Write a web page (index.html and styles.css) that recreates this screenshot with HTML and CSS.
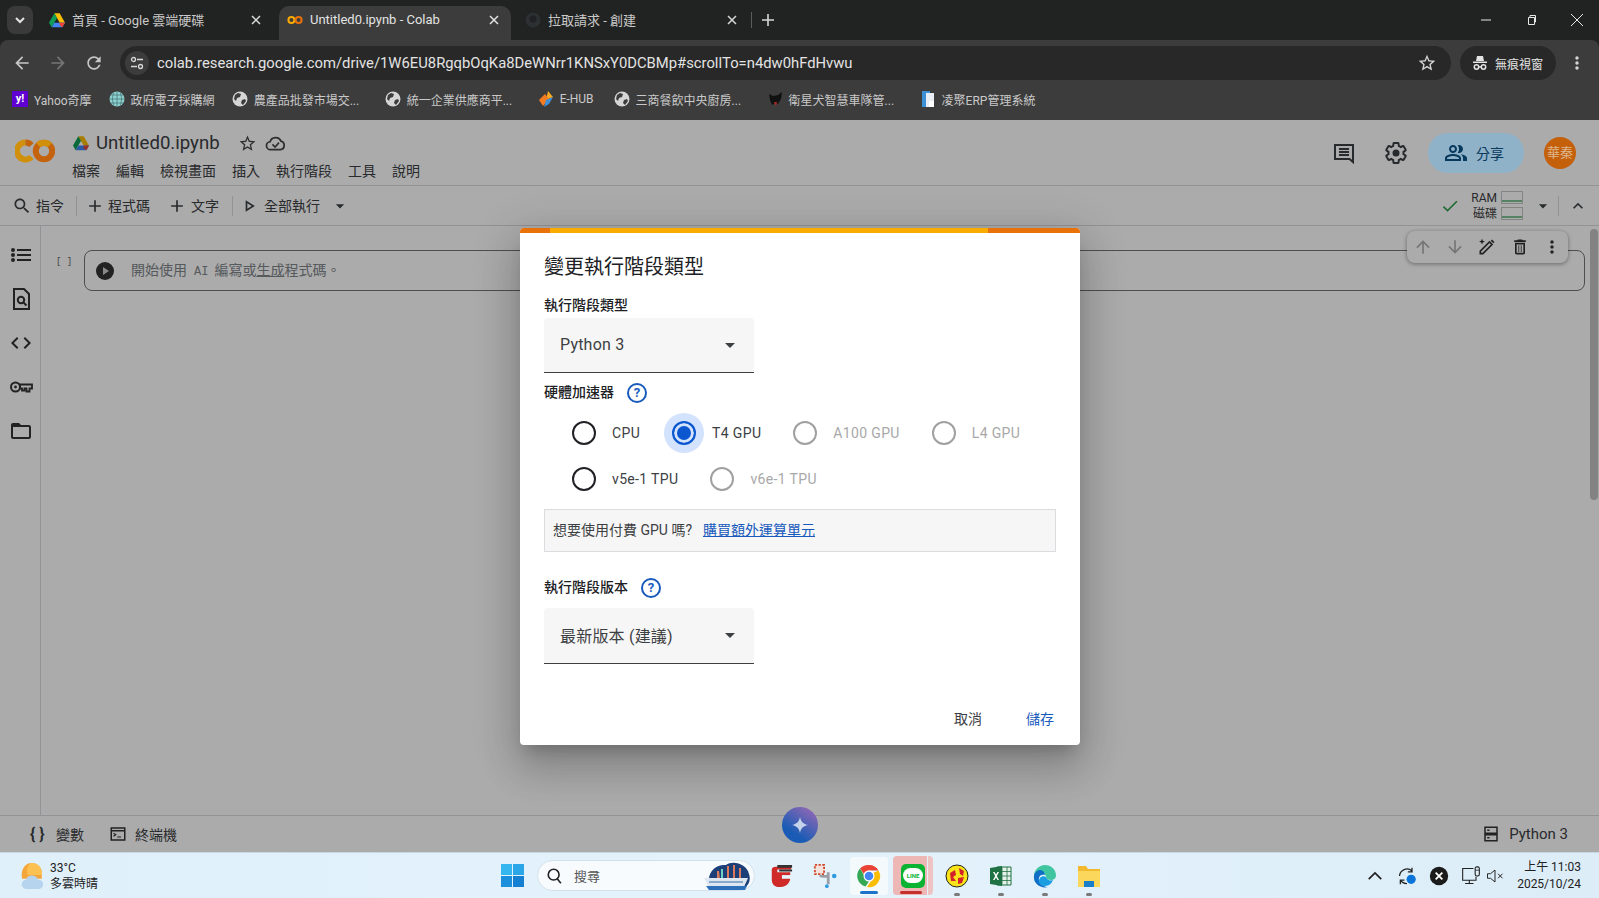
FILE: index.html
```html
<!DOCTYPE html>
<html lang="zh-Hant">

<head>
    <meta charset="utf-8">
    <title>Untitled0.ipynb - Colab</title>
    <link rel="stylesheet" href="styles.css">
</head>

<body>

    <!-- browser tabs -->
    <div class="tabstrip">
        <div class="tab-search"><svg class="ic16" viewBox="0 0 24 24"><path d="M6 9l6 6 6-6" fill="none" stroke="#e3e3e3" stroke-width="3"/></svg></div>
        <div class="tab">
            <svg class="ic16" viewBox="0 0 24 22"><path d="M8 1h8l8 14h-8z" fill="#fbbc04"/><path d="M8 1l4 7-8 14-4-7z" fill="#0f9d58"/><path d="M8 15h16l-4 7H4z" fill="#4285f4"/><path d="M16 15h8l-4 7-4-3z" fill="#ea4335"/></svg>
            <span class="tab-title">首頁 - Google 雲端硬碟</span>
            <svg class="tab-close" viewBox="0 0 12 12"><path d="M2 2l8 8M10 2l-8 8" stroke="#d8d8d8" stroke-width="1.500"/></svg>
        </div>
        <div class="tab tab-active">
            <svg class="ic16" viewBox="0 0 40 24"><circle cx="11" cy="12" r="7.500" fill="none" stroke="#f9ab00" stroke-width="5"/><circle cx="29" cy="12" r="7.500" fill="none" stroke="#e8710a" stroke-width="5"/></svg>
            <span class="tab-title">Untitled0.ipynb - Colab</span>
            <svg class="tab-close" viewBox="0 0 12 12"><path d="M2 2l8 8M10 2l-8 8" stroke="#e3e3e3" stroke-width="1.500"/></svg>
        </div>
        <div class="tab">
            <svg class="ic16" viewBox="0 0 16 16"><circle cx="8" cy="8" r="7.500" fill="#2c3033"/><circle cx="8" cy="7" r="3.500" fill="#202124"/></svg>
            <span class="tab-title">拉取請求 - 創建</span>
            <svg class="tab-close" viewBox="0 0 12 12"><path d="M2 2l8 8M10 2l-8 8" stroke="#d8d8d8" stroke-width="1.500"/></svg>
        </div>
        <div class="tab-sep"></div>
        <svg class="tab-new" viewBox="0 0 16 16"><path d="M8 2v12M2 8h12" stroke="#d6d6d6" stroke-width="1.600"/></svg>
        <div class="win-controls">
            <svg class="win-btn" viewBox="0 0 12 12"><path d="M1 6h10" stroke="#e8e8e8"/></svg>
            <svg class="win-btn" viewBox="0 0 12 12"><path d="M3.500 3.500h6v7h-6z M5 3.500V1.500h5.500v6.500H9.500" fill="none" stroke="#e8e8e8"/></svg>
            <svg class="win-btn win-close" viewBox="0 0 14 14"><path d="M1 1l12 12M13 1L1 13" stroke="#e8e8e8"/></svg>
        </div>
    </div>

    <!-- address bar -->
    <div class="toolbar">
        <svg class="nav-ic" viewBox="0 0 24 24"><path fill="#c7c7c7" d="M20 11H7.830l5.590-5.590L12 4l-8 8 8 8 1.410-1.410L7.830 13H20v-2z"/></svg>
        <svg class="nav-ic" viewBox="0 0 24 24"><path fill="#757575" d="M12 4l-1.410 1.410L16.170 11H4v2h12.170l-5.580 5.590L12 20l8-8z"/></svg>
        <svg class="nav-ic" viewBox="0 0 24 24"><path fill="#c7c7c7" d="M17.650 6.350C16.200 4.900 14.210 4 12 4c-4.420 0-7.990 3.580-7.990 8s3.570 8 7.990 8c3.730 0 6.840-2.550 7.730-6h-2.080c-.82 2.330-3.040 4-5.650 4-3.310 0-6-2.690-6-6s2.690-6 6-6c1.660 0 3.140.69 4.220 1.780L13 11h7V4l-2.350 2.350z"/></svg>
        <div class="omnibox">
            <div class="site-info"><svg class="ic16" viewBox="0 0 16 16"><g fill="none" stroke="#d8d8d8" stroke-width="1.300"><circle cx="4.500" cy="4.500" r="2"/><path d="M8 4.500h6M2 11.500h6"/><circle cx="11.500" cy="11.500" r="2"/></g></svg></div>
            <span class="url">colab.research.google.com/drive/1W6EU8RgqbOqKa8DeWNrr1KNSxY0DCBMp#scrollTo=n4dw0hFdHvwu</span>
            <svg class="omni-star" viewBox="0 0 24 24"><path fill="#d6d6d6" d="M22 9.240l-7.190-.62L12 2 9.190 8.630 2 9.240l5.460 4.730L5.820 21 12 17.270 18.180 21l-1.630-7.030L22 9.240zM12 15.400l-3.760 2.270 1-4.280-3.320-2.880 4.380-.38L12 6.100l1.710 4.040 4.380.38-3.320 2.880 1 4.280L12 15.400z"/></svg>
        </div>
        <div class="incognito">
            <svg class="ic16" viewBox="0 0 16 16"><path fill="#e3e3e3" d="M5 1h6l1 5H4zM1 6.500h14V8H1z"/><g fill="none" stroke="#e3e3e3" stroke-width="1.500"><circle cx="4.500" cy="12" r="2.200"/><circle cx="11.500" cy="12" r="2.200"/><path d="M6.700 12h2.600"/></g></svg>
            <span>無痕視窗</span>
        </div>
        <svg class="nav-ic nav-more" viewBox="0 0 24 24"><path fill="#d6d6d6" d="M12 8c1.100 0 2-.9 2-2s-.9-2-2-2-2 .9-2 2 .9 2 2 2zm0 2c-1.100 0-2 .9-2 2s.9 2 2 2 2-.9 2-2-.9-2-2-2zm0 6c-1.100 0-2 .9-2 2s.9 2 2 2 2-.9 2-2-.9-2-2-2z"/></svg>
    </div>

    <!-- bookmarks -->
    <div class="bookmarks">
        <div class="bm"><span class="bm-yahoo">y!</span><span>Yahoo奇摩</span></div>
        <div class="bm"><svg class="ic16" viewBox="0 0 16 16"><circle cx="8" cy="8" r="7.500" fill="#8fd3cf"/><path d="M.5 8h15M8 .5v15M2 4h12M2 12h12M5 1.500c-2 4-2 9 0 13M11 1.500c2 4 2 9 0 13" stroke="#3f6d70" stroke-width=".7" fill="none"/></svg><span>政府電子採購網</span></div>
        <div class="bm bm-cut"><svg class="ic16"><use href="#globe"/></svg><span>農產品批發市場交...</span></div>
        <div class="bm bm-cut"><svg class="ic16"><use href="#globe"/></svg><span>統一企業供應商平...</span></div>
        <div class="bm bm-ehub"><svg class="ic16" viewBox="0 0 16 16"><path d="M10 0l5 6-7 3z" fill="#f7a823"/><path d="M1 9l6-6 4 5-6 7z" fill="#f47b20"/><path d="M8 9l7-3-4 7-5 3z" fill="#3f8fd8"/></svg><span>E-HUB</span></div>
        <div class="bm bm-cut"><svg class="ic16"><use href="#globe"/></svg><span>三商餐飲中央廚房...</span></div>
        <div class="bm bm-cut"><svg class="ic16" viewBox="0 0 16 16"><path d="M2 3l4 2 5-1 4-3-1 7-3 5-3-1-3 2-2-5z" fill="#111"/><path d="M7 11l2 4 1-4z" fill="#b3261e"/></svg><span>衛星犬智慧車隊管...</span></div>
        <div class="bm"><svg class="ic16" viewBox="0 0 16 16"><path d="M2 0h8v16H2z" fill="#3d8fd6"/><path d="M6 2h8v14H6z" fill="#e8eef3"/><path d="M9 10h5v6H9z" fill="#fff"/></svg><span>凌聚ERP管理系統</span></div>
    </div>

    <svg class="defs">
        <symbol id="globe" viewBox="0 0 16 16">
            <circle cx="8" cy="8" r="7.500" fill="#d5d5d5"/>
            <path d="M3 4l3-2 3 1-1 3-3 1-1 3-2-2zM10 9l3-1 1 2-3 4-2-2z" fill="#3c3c3c"/>
        </symbol>
    </svg>

    <!-- colab page -->
    <div class="app">
        <header class="app-header">
            <svg class="co-logo" viewBox="0 0 40 24"><path d="M10.500 3.500a8.500 8.500 0 1 0 6 14.500" fill="none" stroke="#d0900c" stroke-width="6"/><path d="M10.500 3.500a8.500 8.500 0 0 1 6 2.500" fill="none" stroke="#c4620e" stroke-width="6"/><circle cx="29" cy="12" r="8.200" fill="none" stroke="#c4620e" stroke-width="6"/><path d="M23.200 6.200a8.200 8.200 0 0 1 11.600 0" fill="none" stroke="#d0900c" stroke-width="6"/></svg>
            <div class="doc-info">
                <div class="doc-title">
                    <svg class="drive-ic" viewBox="0 0 24 22"><path d="M8 0h8l8 14h-8z" fill="#fbbc04"/><path d="M8 0l4 7-8 14-4-7z" fill="#0f9d58"/><path d="M8 14h16l-4 7H4z" fill="#4285f4"/><path d="M16 14h8l-4 7-4-3z" fill="#ea4335"/></svg>
                    <span class="doc-name">Untitled0.ipynb</span>
                    <svg class="doc-star" viewBox="0 0 24 24"><path fill="#444" d="M22 9.240l-7.190-.62L12 2 9.190 8.630 2 9.240l5.460 4.730L5.820 21 12 17.270 18.180 21l-1.630-7.030L22 9.240zM12 15.400l-3.760 2.270 1-4.280-3.320-2.880 4.380-.38L12 6.100l1.710 4.040 4.380.38-3.320 2.880 1 4.280L12 15.400z"/></svg>
                    <svg class="doc-cloud" viewBox="0 0 24 24"><path d="M6.500 19a4.500 4.500 0 0 1-.6-9A6.500 6.500 0 0 1 18.200 9.200 5 5 0 0 1 17.500 19z" fill="none" stroke="#444" stroke-width="2"/><path d="M8.500 13l3 3 4.500-5" fill="none" stroke="#444" stroke-width="1.800"/></svg>
                </div>
                <nav class="menu">
                    <span>檔案</span><span>編輯</span><span>檢視畫面</span><span>插入</span><span>執行階段</span><span>工具</span><span>說明</span>
                </nav>
            </div>
            <div class="header-right">
                <svg class="hd-ic" viewBox="0 0 24 24"><path d="M3 4h18v17l-3.500-3H3z M7 8h10M7 11h10M7 14h10" fill="none" stroke="#3c4043" stroke-width="2"/></svg>
                <svg class="hd-ic" viewBox="0 0 24 24"><path fill="none" stroke="#3c4043" stroke-width="2" d="M19.430 12.980c.04-.32.07-.64.07-.98s-.03-.66-.07-.98l2.110-1.650c.19-.15.24-.42.12-.64l-2-3.460c-.12-.22-.39-.3-.61-.22l-2.490 1c-.52-.4-1.080-.73-1.690-.98l-.38-2.650C14.460 2.180 14.250 2 14 2h-4c-.25 0-.46.18-.49.42l-.38 2.650c-.61.25-1.170.59-1.690.98l-2.490-1c-.23-.09-.49 0-.61.22l-2 3.460c-.13.22-.07.49.12.64l2.110 1.650c-.04.32-.07.65-.07.98s.03.66.07.98l-2.110 1.650c-.19.15-.24.42-.12.64l2 3.460c.12.22.39.3.61.22l2.490-1c.52.4 1.080.73 1.690.98l.38 2.650c.03.24.24.42.49.42h4c.25 0 .46-.18.49-.42l.38-2.650c.61-.25 1.170-.59 1.690-.98l2.490 1c.23.09.49 0 .61-.22l2-3.460c.12-.22.07-.49-.12-.64l-2.110-1.650z"/><circle cx="12" cy="12" r="3.500" fill="#3c4043"/></svg>
                <div class="share">
                    <svg class="share-ic" viewBox="0 0 24 24"><path fill="#06395c" d="M16.670 13.130C18.040 14.060 19 15.320 19 17v3h4v-3c0-2.180-3.570-3.470-6.330-3.870zM15 12c2.210 0 4-1.790 4-4s-1.790-4-4-4c-.47 0-.91.1-1.330.24C14.500 5.270 15 6.580 15 8s-.5 2.730-1.330 3.760c.42.14.86.24 1.330.24zM9 12c2.210 0 4-1.790 4-4s-1.790-4-4-4-4 1.790-4 4 1.790 4 4 4zm0-6c1.100 0 2 .9 2 2s-.9 2-2 2-2-.9-2-2 .9-2 2-2zM9 13c-2.670 0-8 1.340-8 4v3h16v-3c0-2.660-5.330-4-8-4zm6 5H3v-.99C3.200 16.290 6.300 15 9 15s5.800 1.290 6 2v1z"/></svg>
                    <span>分享</span>
                </div>
                <div class="avatar">華秦</div>
            </div>
        </header>

        <div class="cmd-bar">
            <div class="cmd cmd-search"><svg class="cmd-ic" viewBox="0 0 24 24"><path d="M15.500 14h-.79l-.28-.27C15.410 12.590 16 11.110 16 9.500 16 5.910 13.090 3 9.500 3S3 5.910 3 9.500 5.910 16 9.500 16c1.610 0 3.090-.59 4.230-1.570l.27.28v.79l5 4.990L20.490 19l-4.990-5zm-6 0C7.010 14 5 11.990 5 9.500S7.010 5 9.500 5 14 7.010 14 9.500 11.990 14 9.500 14z"/></svg><span>指令</span></div>
            <div class="cmd-sep"></div>
            <div class="cmd cmd-code"><svg class="cmd-ic" viewBox="0 0 24 24"><path d="M19 13h-6v6h-2v-6H5v-2h6V5h2v6h6v2z"/></svg><span>程式碼</span></div>
            <div class="cmd cmd-text"><svg class="cmd-ic" viewBox="0 0 24 24"><path d="M19 13h-6v6h-2v-6H5v-2h6V5h2v6h6v2z"/></svg><span>文字</span></div>
            <div class="cmd-sep cmd-sep-run"></div>
            <div class="cmd cmd-run"><svg class="cmd-ic" viewBox="0 0 24 24"><path d="M10 8.640L15.270 12 10 15.360V8.640M8 5v14l11-7L8 5z"/></svg><span>全部執行</span></div>
            <svg class="cmd-caret" viewBox="0 0 24 24"><path d="M7 10l5 5 5-5z"/></svg>

            <div class="res">
                <svg class="res-check" viewBox="0 0 24 24"><path fill="#2f9e4f" d="M9 16.170L4.830 12l-1.420 1.410L9 19 21 7l-1.410-1.410z"/></svg>
                <div class="res-labels"><span>RAM</span><span>磁碟</span></div>
                <div class="res-bars"><div class="res-bar"></div><div class="res-bar"></div></div>
                <svg class="cmd-caret res-caret" viewBox="0 0 24 24"><path d="M7 10l5 5 5-5z"/></svg>
                <div class="cmd-sep res-sep"></div>
                <svg class="res-up" viewBox="0 0 24 24"><path d="M12 8l-6 6 1.410 1.410L12 10.830l4.590 4.580L18 14z"/></svg>
            </div>
        </div>

        <div class="main">
            <aside class="sidebar">
                <svg class="side-ic" viewBox="0 0 24 24"><path d="M8 6h14v2H8zM8 11h14v2H8zM8 16h14v2H8z"/><circle cx="4" cy="7" r="2"/><circle cx="4" cy="12" r="2"/><circle cx="4" cy="17" r="2"/></svg>
                <svg class="side-ic" viewBox="0 0 24 24"><path d="M5 2h10l5 5v15H5z" fill="none" stroke="#333" stroke-width="2"/><circle cx="12" cy="13" r="3.200" fill="none" stroke="#333" stroke-width="2"/><path d="M14.500 15.500l3 3" stroke="#333" stroke-width="2"/></svg>
                <svg class="side-ic" viewBox="0 0 24 24"><path d="M9.400 16.600L4.800 12l4.600-4.600L8 6l-6 6 6 6 1.400-1.400zm5.200 0l4.600-4.600-4.600-4.600L16 6l6 6-6 6-1.400-1.400z"/></svg>
                <svg class="side-ic" viewBox="0 0 24 24"><circle cx="6.500" cy="12" r="4.500" fill="none" stroke="#333" stroke-width="2"/><circle cx="6.500" cy="12" r="1.400"/><path d="M11 9.500h12v4h-2.500v3h-3v-3h-2v2h-2.500v-2H11z" fill="none" stroke="#333" stroke-width="1.800"/></svg>
                <svg class="side-ic" viewBox="0 0 24 24"><path d="M20 6h-8l-2-2H4c-1.100 0-1.990.9-1.990 2L2 18c0 1.100.9 2 2 2h16c1.100 0 2-.9 2-2V8c0-1.100-.9-2-2-2zm0 12H4V8h16v10z"/></svg>
            </aside>
            <div class="notebook">
                <div class="cell-count">[ ]</div>
                <div class="cell">
                    <svg class="cell-run" viewBox="0 0 18 18"><circle cx="9" cy="9" r="9" fill="#333"/><path d="M7 5l6 4-6 4z" fill="#ccc"/></svg>
                    <span class="cell-hint">開始使用<span class="cell-ai">AI</span>編寫或<u>生成</u>程式碼<span class="cell-stop">。</span></span>
                </div>
            </div>
        </div>

        <footer class="status-bar">
            <span class="status-braces">{ }</span><span class="status-txt">變數</span>
            <svg class="status-ic" viewBox="0 0 24 24"><path d="M3 4h18v16H3z M3 7.500h18" fill="none" stroke="#333" stroke-width="2"/><path d="M6 11l3 2-3 2M11 16h5" fill="none" stroke="#333" stroke-width="1.500"/></svg><span class="status-txt">終端機</span>
            <div class="status-right">
                <svg class="status-ic" viewBox="0 0 24 24"><path d="M4 3h16v8H4zM4 13h16v8H4z" fill="none" stroke="#333" stroke-width="2"/><path d="M7 6h3v2H7zM7 16h3v2H7z" fill="#333"/></svg>
                <span class="status-txt status-kernel">Python 3</span>
            </div>
        </footer>

        <!-- floating cell tools, under the scrim -->
        <div class="cell-tools">
            <svg class="tool-ic" viewBox="0 0 24 24"><path fill="#b0b0b0" d="M4 12l1.410 1.410L11 7.830V20h2V7.830l5.580 5.590L20 12l-8-8-8 8z"/></svg>
            <svg class="tool-ic" viewBox="0 0 24 24"><path fill="#b0b0b0" d="M20 12l-1.410-1.410L13 16.170V4h-2v12.170l-5.580-5.590L4 12l8 8 8-8z"/></svg>
            <svg class="tool-ic" viewBox="0 0 24 24"><path d="M7 20H4v-3L15 6l3 3z" fill="none" stroke="#333" stroke-width="2"/><path d="M16.500 4.500l1.500-1.500 3 3-1.500 1.500z" fill="#333"/><path d="M6 2l1 2.500L9.500 5.500 7 6.500 6 9 5 6.500 2.500 5.500 5 4.500z" fill="#333"/></svg>
            <svg class="tool-ic" viewBox="0 0 24 24"><path fill="#333" d="M6 19c0 1.100.9 2 2 2h8c1.100 0 2-.9 2-2V7H6v12zM8 9h8v10H8V9zm7.500-5l-1-1h-5l-1 1H5v2h14V4z"/><path d="M10.500 10v8M13.500 10v8" stroke="#333"/></svg>
            <svg class="tool-ic" viewBox="0 0 24 24"><path fill="#333" d="M12 8c1.100 0 2-.9 2-2s-.9-2-2-2-2 .9-2 2 .9 2 2 2zm0 2c-1.100 0-2 .9-2 2s.9 2 2 2 2-.9 2-2-.9-2-2-2zm0 6c-1.100 0-2 .9-2 2s.9 2 2 2 2-.9 2-2-.9-2-2-2z"/></svg>
        </div>
        <div class="page-scroll"></div>

        <div class="scrim"></div>

        <div class="gemini"><svg class="gemini-star" viewBox="0 0 24 24"><path d="M12 1c1 6.500 4.500 10 11 11-6.500 1-10 4.500-11 11-1-6.500-4.500-10-11-11 6.500-1 10-4.500 11-11z" fill="#c5d3ea"/></svg></div>

        <!-- runtime dialog -->
        <div class="dialog">
            <div class="dialog-strip"><i class="strip-o"></i><i class="strip-y"></i><i class="strip-e"></i></div>
            <div class="dialog-body">
                <h2 class="dialog-title">變更執行階段類型</h2>

                <div class="field-label label-type">執行階段類型</div>
                <div class="select select-type"><span class="select-value">Python 3</span><svg class="select-caret" viewBox="0 0 10 5"><path d="M0 0l5 5 5-5z"/></svg></div>

                <div class="field-label label-hw">硬體加速器<span class="help help-hw">?</span></div>
                <div class="radio-row radio-row-first">
                    <div class="radio-opt"><span class="radio"></span><span>CPU</span></div>
                    <div class="radio-opt on"><span class="radio"></span><span>T4 GPU</span></div>
                    <div class="radio-opt off"><span class="radio"></span><span>A100 GPU</span></div>
                    <div class="radio-opt off"><span class="radio"></span><span>L4 GPU</span></div>
                </div>
                <div class="radio-row">
                    <div class="radio-opt"><span class="radio"></span><span>v5e-1 TPU</span></div>
                    <div class="radio-opt off"><span class="radio"></span><span>v6e-1 TPU</span></div>
                </div>

                <div class="info-box"><span class="info-txt">想要使用付費 GPU 嗎?</span><a class="info-link">購買額外運算單元</a></div>

                <div class="field-label label-ver">執行階段版本<span class="help help-ver">?</span></div>
                <div class="select select-ver"><span class="select-value">最新版本 (建議)</span><svg class="select-caret" viewBox="0 0 10 5"><path d="M0 0l5 5 5-5z"/></svg></div>

                <div class="dialog-actions">
                    <span class="btn-cancel">取消</span>
                    <span class="btn-save">儲存</span>
                </div>
            </div>
        </div>
    </div>

    <!-- windows taskbar -->
    <div class="taskbar">
        <div class="weather">
            <svg class="weather-ic" viewBox="0 0 24 30"><path d="M12 1a11 11 0 0 1 11 13v4H2C0 10 4 1 12 1z" fill="#f5a63a"/><path d="M12 1a11 11 0 0 1 11 13H8C6 8 8 3 12 1z" fill="#fbc252"/><path d="M7 29a5 5 0 0 1-1-10 7 7 0 0 1 13 0 5 5 0 0 1 1 10z" fill="#b6d4ee"/></svg>
            <div class="weather-txt"><span>33°C</span><span>多雲時晴</span></div>
        </div>
        <svg class="win-logo" viewBox="0 0 23 23"><path d="M0 0h11v11H0z" fill="#35b6ee"/><path d="M12 0h11v11H12z" fill="#2aa5e8"/><path d="M0 12h11v11H0z" fill="#1c8fdc"/><path d="M12 12h11v11H12z" fill="#1580d2"/></svg>
        <div class="search-pill">
            <svg class="pill-ic" viewBox="0 0 20 20"><circle cx="8.500" cy="8.500" r="6" fill="none" stroke="#222" stroke-width="1.800"/><path d="M12.500 13l4 5" stroke="#222" stroke-width="1.800"/></svg>
            <span class="pill-txt">搜尋</span>
            <svg class="pill-art" viewBox="0 0 48 30"><path d="M6 20C5 10 14 3 23 4 30-1 44 3 46 13c2 6 0 11-5 14H10z" fill="#1d3f78"/><path d="M14 10l2 0 1 8h-3zM24 5h2v13h-2zM30 4h2v14h-2zM36 7h2v11h-2z" fill="#d9795c"/><path d="M18 8h2v10h-2z" fill="#6fd0c8"/><path d="M1 17h44l-4 9H6z" fill="#dce7f2"/><path d="M6 20h34v2H6z" fill="#8aa8c8"/><path d="M3 25h41l-2 4H6z" fill="#2d6fb8"/></svg>
        </div>
        <div class="apps">
            <div class="app-ic"><svg viewBox="0 0 26 26"><path d="M3 6c0-2 2-3 4-3h17v3H9v3h14v6c0 6-5 10-10 10H9c-4-1-6-4-6-8z" fill="#cf2a27"/><path d="M9 1h16v3H9zM11 6h14v2H11z" fill="#333"/><path d="M14 12h10v4H14z" fill="#e9f3fa"/></svg></div>
            <div class="app-ic"><svg viewBox="0 0 26 26"><path d="M2 1h10v10H2z" fill="#f6e2dc"/><path d="M2 1h10v10H2z" fill="none" stroke="#cf4b2e" stroke-width="2" stroke-dasharray="2.500 1.500"/><path d="M7 12h10v3h-6l-4-1zM15 9h3v13h-3z" fill="#9a9fa6"/><circle cx="23" cy="13" r="2.500" fill="#2f9be0"/><circle cx="15" cy="24" r="2" fill="#2f9be0"/></svg></div>
            <div class="app-ic app-chrome">
                <svg viewBox="0 0 24 24"><path d="M12 1a11 11 0 0 1 9.500 5.500H12a5.500 5.500 0 0 0-5.200 3.600L3 4.500A11 11 0 0 1 12 1z" fill="#ea4335"/><path d="M3 4.500l5 8.500a5 5 0 0 0 4 4.500L8.500 22.500A11 11 0 0 1 3 4.500z" fill="#34a853"/><path d="M21.500 6.500A11 11 0 0 1 10 23l4-6a5.500 5.500 0 0 0 2-8z" fill="#fbbc04"/><circle cx="12" cy="12" r="5.500" fill="#fff"/><circle cx="12" cy="12" r="4.300" fill="#4285f4"/></svg>
                <i class="app-bar"></i>
            </div>
            <div class="app-ic app-line">
                <div class="line-tile"><span class="line-bubble">LINE</span></div>
                <i class="app-bar"></i>
            </div>
            <div class="app-ic app-open"><svg viewBox="0 0 24 24"><circle cx="12" cy="12" r="11" fill="#f9e419" stroke="#222" stroke-width="1"/><path d="M5 9l5-3 1 5-3 2 3 4-5 0zM14 4l5 3-1 5-3-2zM13 14l6-1-2 6-4 1z" fill="#d3222a"/></svg><i class="app-dot"></i></div>
            <div class="app-ic app-open"><svg viewBox="0 0 24 24"><path d="M8 3h14v18H8z" fill="#e6f1ea" stroke="#1f7244"/><path d="M13 3v18M18 3v18M8 7.500h14M8 12h14M8 16.500h14" stroke="#1f7244" stroke-width=".8"/><path d="M1 4l12-2v20L1 20z" fill="#1f7244"/><path d="M4 8l1.500 0 1.500 2.500L8.500 8H10l-2.200 4L10 16H8.500L7 13.500 5.500 16H4l2.200-4z" fill="#fff"/></svg><i class="app-dot"></i></div>
            <div class="app-ic app-open"><svg viewBox="0 0 24 24"><path d="M12 1c6 0 11 4.500 11 10.500 0 3-2.500 4.500-5 4.500-3 0-5-1.500-5-3.500 0-2-3-4-6-2C9 6 4 8 1 12 1 6 6 1 12 1z" fill="#3fc6a0"/><path d="M1 12c.5-4 4-6.500 6.500-6 3 .5 4.500 3 4 5-4-1-6.500 2-5.500 6 1 3.500 5 6 9 6C8 25 0 20 1 12z" fill="#0f6fc6"/><path d="M13 13c1 3 4 4 7 3-1 3-4 6-8 6-3 0-6-2-6-5 0-3 3-6 7-4z" fill="#1b9de2"/></svg><i class="app-dot"></i></div>
            <div class="app-ic app-open"><svg viewBox="0 0 24 24"><path d="M1 2h8l2 3h12v18H1z" fill="#f2b82e"/><path d="M1 7h22v16H1z" fill="#fbd75b"/><path d="M7 17h10v6H7z" fill="#1a7fc9"/></svg><i class="app-dot"></i></div>
        </div>
        <div class="tray">
            <svg class="tray-ic" viewBox="0 0 16 16"><path d="M3 10.500l5-5 5 5" fill="none" stroke="#222" stroke-width="1.400"/></svg>
            <svg class="tray-ic" viewBox="0 0 24 24"><path d="M3 12a9 9 0 0 1 15-6M18 2v5h-5M12 21a9 9 0 0 1-8-4M4 22v-5h5" fill="none" stroke="#222" stroke-width="1.500"/><circle cx="17" cy="16" r="5.500" fill="#0a74d8"/></svg>
            <svg class="tray-ic" viewBox="0 0 24 24"><circle cx="12" cy="12" r="11" fill="#1b1b1b"/><path d="M8 8l8 8M16 8l-8 8" stroke="#fff" stroke-width="2.200"/></svg>
            <svg class="tray-ic" viewBox="0 0 24 24"><path d="M15 3H2v14h16v-4M10 17v4M5 21h10" fill="none" stroke="#222" stroke-width="1.300"/><rect x="17" y="1" width="5" height="11" rx="2" fill="none" stroke="#222" stroke-width="1.300"/><path d="M17 5h5" stroke="#222"/></svg>
            <svg class="tray-ic tray-sound" viewBox="0 0 24 24"><path d="M2 9h4l6-5v16l-6-5H2z" fill="none" stroke="#222" stroke-width="1.300"/><path d="M16 9l6 6M22 9l-6 6" stroke="#222" stroke-width="1.300"/></svg>
            <div class="clock"><span>上午 11:03</span><span>2025/10/24</span></div>
        </div>
    </div>

</body>

</html>
```

FILE: styles.css
```css
* {
    box-sizing: border-box;
}

body {
    margin: 0;
    width: 1599px;
    height: 898px;
    overflow: hidden;
    display: flex;
    flex-direction: column;
    background-color: #212322;
    font-family: Roboto, "Noto Sans CJK TC", sans-serif;
    color: #202124;
}

svg {
    flex-shrink: 0;
    display: block;
}

.defs {
    display: none;
}

.ic16 {
    width: 16px;
    height: 16px;
}

/* browser tabs */
.tabstrip {
    height: 40px;
    display: flex;
    align-items: flex-end;
    padding-left: 7px;
}

.tab-search {
    width: 26px;
    height: 28px;
    margin-bottom: 6px;
    margin-right: 8px;
    border-radius: 8px;
    background-color: #3a3a3a;
    display: flex;
    align-items: center;
    justify-content: center;
}

.tab {
    width: 232px;
    height: 34px;
    margin-right: 6px;
    padding: 0 9px 7px 8px;
    display: flex;
    align-items: center;
    gap: 7px;
    border-radius: 10px 10px 0 0;
    color: #c9c9c9;
    font-size: 13px;
}

.tab-active {
    background-color: #3c3c3c;
    color: #e3e3e3;
}

.tab-close {
    margin-left: auto;
    margin-right: 2px;
    width: 12px;
    height: 12px;
}

.tab-sep {
    width: 1px;
    height: 16px;
    margin: 0 0 12px -4px;
    background-color: #5c5c5c;
}

.tab-new {
    width: 16px;
    height: 16px;
    margin: 0 0 12px 8px;
}

.win-controls {
    margin-left: auto;
    align-self: stretch;
    display: flex;
    align-items: center;
    gap: 33px;
    padding-right: 15px;
}

.win-btn {
    width: 12px;
    height: 12px;
}

.win-close {
    width: 14px;
    height: 14px;
}

/* address bar */
.toolbar {
    height: 40px;
    display: flex;
    align-items: center;
    padding: 0 0 0 12px;
    gap: 16px;
    background-color: #3c3c3c;
    border-radius: 8px 8px 0 0;
}

.nav-ic {
    width: 20px;
    height: 20px;
    margin-top: 6px;
}

.nav-more {
    margin-left: -5px;
}

.omnibox {
    width: 1331px;
    height: 34px;
    margin: 6px 0 0 0;
    padding-left: 5px;
    display: flex;
    align-items: center;
    background-color: #282828;
    border-radius: 17px;
    color: #e3e3e3;
    font-size: 14.8px;
}

.site-info {
    width: 24px;
    height: 24px;
    border-radius: 50%;
    background-color: #3c3c3c;
    display: flex;
    align-items: center;
    justify-content: center;
}

.url {
    margin-left: 8px;
}

.omni-star {
    width: 20px;
    height: 20px;
    margin-left: auto;
    margin-right: 14px;
}

.incognito {
    width: 96px;
    height: 34px;
    margin: 6px 0 0 -7px;
    padding-left: 12px;
    display: flex;
    align-items: center;
    gap: 7px;
    background-color: #282828;
    border-radius: 17px;
    color: #e3e3e3;
    font-size: 12px;
}

/* bookmarks */
.bookmarks {
    height: 40px;
    display: flex;
    align-items: center;
    padding: 0 0 2px 12px;
    background-color: #3c3c3c;
    color: #c9c9c9;
    font-size: 12px;
}

.bm {
    display: flex;
    align-items: center;
    gap: 6px;
    margin-right: 17px;
    white-space: nowrap;
}

.bm-cut {
    width: 136px;
}

.bm-ehub {
    margin-right: 20px;
}

.bm-yahoo {
    width: 16px;
    height: 16px;
    background-color: #5f01d1;
    color: #fff;
    font-weight: 700;
    font-size: 11px;
    line-height: 15px;
    text-align: center;
}

/* colab page */
.app {
    position: relative;
    height: 732px;
    background-color: #fff;
    display: flex;
    flex-direction: column;
}

.app-header {
    height: 66px;
    flex-shrink: 0;
    display: flex;
    border-bottom: 1px solid #dadce0;
    padding-left: 15px;
}

.co-logo {
    width: 40px;
    height: 24px;
    margin: 19px 17px 0 0;
    position: relative;
    z-index: 1;
}

.doc-title {
    height: 24px;
    margin-top: 11px;
    display: flex;
    align-items: center;
}

.drive-ic {
    width: 16px;
    height: 15px;
    margin-left: 1px;
}

.doc-name {
    margin-left: 7px;
    font-size: 18.6px;
    color: #3c4043;
}

.doc-star {
    width: 19px;
    height: 19px;
    margin-left: 18px;
}

.doc-cloud {
    width: 21px;
    height: 21px;
    margin-left: 8px;
}

.menu {
    display: flex;
    gap: 16px;
    margin-top: 5px;
    font-size: 14px;
    line-height: 22px;
    color: #3c4043;
}

.header-right {
    margin-left: auto;
    display: flex;
    align-items: center;
    padding-right: 23px;
}

.hd-ic {
    width: 24px;
    height: 24px;
    margin-right: 28px;
}

.hd-ic + .share {
    margin-left: -8px;
}

/* these two keep their own dimmed colours above the scrim */
.share {
    position: relative;
    z-index: 1;
    width: 96px;
    height: 40px;
    display: flex;
    align-items: center;
    padding-left: 16px;
    gap: 8px;
    background-color: #8fb2c9;
    color: #0a3a5c;
    border-radius: 20px;
    font-size: 14px;
}

.share-ic {
    width: 24px;
    height: 24px;
}

.avatar {
    position: relative;
    z-index: 1;
    width: 32px;
    height: 32px;
    margin-left: 20px;
    border-radius: 50%;
    background-color: #c4600a;
    color: #e0b890;
    font-size: 13px;
    line-height: 32px;
    text-align: center;
    white-space: nowrap;
    overflow: hidden;
}

.cmd-bar {
    height: 40px;
    flex-shrink: 0;
    display: flex;
    align-items: center;
    border-bottom: 1px solid #dadce0;
    font-size: 14px;
    color: #3c4043;
}

.cmd {
    display: flex;
    align-items: center;
}

.cmd span {
    margin-top: -2px;
}

.cmd-ic {
    width: 20px;
    height: 20px;
    fill: #3c4043;
}

.cmd-search {
    margin-left: 12px;
    gap: 4px;
}

.cmd-code {
    margin-left: 8px;
    gap: 3px;
}

.cmd-text {
    margin-left: 17px;
    gap: 4px;
}

.cmd-run {
    margin-left: 6px;
    gap: 5px;
}

.cmd-sep {
    width: 1px;
    height: 20px;
    margin-left: 12px;
    background-color: #dadce0;
}

.cmd-sep-run {
    margin-left: 13px;
}

.cmd-caret {
    width: 20px;
    height: 20px;
    margin-left: 10px;
    fill: #3c4043;
}

.res {
    margin-left: auto;
    display: flex;
    align-items: center;
    padding-right: 11px;
}

.res-check {
    width: 20px;
    height: 20px;
}

.res-labels {
    width: 35px;
    margin-left: 2px;
    display: flex;
    flex-direction: column;
    align-items: flex-end;
    font-size: 12px;
    line-height: 16px;
}

.res-bars {
    margin-left: 4px;
    display: flex;
    flex-direction: column;
    gap: 3px;
}

.res-bar {
    width: 22px;
    height: 13px;
    border: 1px solid #c4c7c5;
    box-shadow: inset 0 -1px 0 #fff, inset 0 -3px 0 #7cc492;
}

.res-caret {
    margin-left: 10px;
}

.res-sep {
    margin-left: 5px;
}

.res-up {
    width: 20px;
    height: 20px;
    margin-left: 9px;
    fill: #3c4043;
}

.main {
    flex: 1;
    display: flex;
}

.sidebar {
    width: 41px;
    flex-shrink: 0;
    border-right: 1px solid #dadce0;
    padding-top: 17px;
    display: flex;
    flex-direction: column;
    align-items: center;
    gap: 20px;
}

.side-ic {
    width: 24px;
    height: 24px;
    fill: #333;
    margin-left: 1px;
}

.notebook {
    flex: 1;
    display: flex;
    align-items: flex-start;
    padding: 24px 14px 0 15px;
}

.cell-count {
    width: 28px;
    margin-top: 7px;
    font-family: "Liberation Mono", monospace;
    font-size: 9px;
    color: #666;
}

.cell {
    flex: 1;
    height: 41px;
    display: flex;
    align-items: center;
    padding-left: 11px;
    border: 1px solid #72777a;
    border-radius: 8px;
}

.cell-run {
    width: 18px;
    height: 18px;
}

.cell-hint {
    margin: -3px 0 0 17px;
    font-size: 14px;
    color: #80868b;
}

.cell-ai {
    margin: 0 6px 0 7px;
    font-family: "Liberation Mono", monospace;
    font-size: 12px;
}

.cell-stop {
    font-family: "Noto Sans CJK SC", sans-serif;
}

.status-bar {
    height: 37px;
    flex-shrink: 0;
    display: flex;
    align-items: center;
    border-top: 1px solid #dadce0;
    font-size: 14px;
    color: #3c4043;
    padding-left: 30px;
}

.status-braces {
    width: 18px;
    font-weight: 700;
    font-size: 16px;
    white-space: nowrap;
}

.status-txt {
    margin-left: 8px;
}

.status-ic {
    width: 18px;
    height: 18px;
    margin-left: 25px;
}

.status-bar .status-txt:first-of-type {
    margin-left: 9px;
}

.status-right {
    margin-left: auto;
    display: flex;
    align-items: center;
    padding-right: 31px;
}

.status-right .status-txt {
    margin-left: 10px;
}

.status-kernel {
    font-size: 15px;
}

.cell-tools {
    position: absolute;
    left: 1407px;
    top: 111px;
    width: 161px;
    height: 32px;
    display: flex;
    align-items: center;
    justify-content: space-around;
    background-color: #fff;
    border-radius: 8px;
    box-shadow: 0 1px 4px rgba(0, 0, 0, .4);
}

.tool-ic {
    width: 20px;
    height: 20px;
}

.page-scroll {
    position: absolute;
    left: 1590px;
    top: 109px;
    width: 8px;
    height: 271px;
    border-radius: 4px;
    background-color: #c4c4c4;
}

.scrim {
    position: absolute;
    inset: 0;
    background-color: rgba(0, 0, 0, .33);
}

.gemini {
    position: absolute;
    left: 782px;
    top: 687px;
    width: 36px;
    height: 36px;
    border-radius: 50%;
    background: linear-gradient(35deg, #1a5cb5 30%, #8766b5 85%);
    display: flex;
    align-items: center;
    justify-content: center;
}

.gemini-star {
    width: 18px;
    height: 18px;
}

/* runtime dialog */
.dialog {
    position: absolute;
    left: 520px;
    top: 108px;
    width: 560px;
    height: 517px;
    background-color: #fff;
    border-radius: 4px;
    overflow: hidden;
    box-shadow: 0 11px 15px -7px rgba(0, 0, 0, .2), 0 24px 38px 3px rgba(0, 0, 0, .14), 0 9px 46px 8px rgba(0, 0, 0, .12);
}

.dialog-strip {
    height: 5px;
    display: flex;
}

.strip-o {
    width: 30px;
    background-color: #e8710a;
}

.strip-y {
    width: 438px;
    background-color: #f9ab00;
}

.strip-e {
    flex: 1;
    background-color: #e8710a;
}

.dialog-body {
    padding: 0 24px;
}

.dialog-title {
    margin: 20px 0 0;
    font-size: 20px;
    line-height: 28px;
    font-weight: 400;
    color: #202124;
}

.field-label {
    display: flex;
    align-items: center;
    font-size: 14px;
    line-height: 20px;
    font-weight: 500;
    color: #202124;
}

.label-type {
    margin-top: 14px;
}

.label-hw {
    margin-top: 8px;
}

.label-ver {
    margin-top: 24px;
}

.help {
    width: 20px;
    height: 20px;
    margin-top: 2px;
    border: 2px solid #185abc;
    border-radius: 50%;
    color: #185abc;
    font-size: 13px;
    font-weight: 700;
    line-height: 16px;
    text-align: center;
}

.help-hw {
    margin-left: 13px;
}

.help-ver {
    margin-left: 13px;
}

.select {
    width: 210px;
    display: flex;
    align-items: center;
    justify-content: space-between;
    padding: 0 19px 0 16px;
    background-color: #f6f6f6;
    border-bottom: 1px solid #3c4043;
    border-radius: 4px 4px 0 0;
    font-size: 16px;
    letter-spacing: .2px;
    color: #3c4043;
}

.select-value {
    margin-top: -2px;
}

.select-type {
    height: 55px;
    margin-top: 3px;
}

.select-ver {
    height: 56px;
    margin-top: 10px;
}

.select-caret {
    width: 10px;
    height: 5px;
    fill: #3c4043;
}

.radio-row {
    height: 46px;
    display: flex;
    align-items: center;
    gap: 24px;
    padding-left: 20px;
}

.radio-row-first {
    margin-top: 7px;
}

.radio-opt {
    display: flex;
    align-items: center;
    gap: 8px;
    font-size: 14px;
    letter-spacing: .35px;
    color: #3c4043;
}

.radio {
    position: relative;
    width: 40px;
    height: 40px;
    border-radius: 50%;
    display: flex;
    align-items: center;
    justify-content: center;
}

.radio::before {
    content: "";
    width: 20px;
    height: 20px;
    border: 2px solid #202124;
    border-radius: 50%;
}

.radio-opt.on .radio {
    background-color: #d3e3fd;
}

.radio-opt.on .radio::before {
    border-color: #0b57d0;
    background-color: #0b57d0;
    box-shadow: inset 0 0 0 3px #d3e3fd;
}

.radio-opt.off {
    color: #a8a8a8;
}

.radio-opt.off .radio::before {
    border-color: #a0a0a0;
}

.info-box {
    height: 43px;
    margin-top: 7px;
    padding-left: 8px;
    display: flex;
    align-items: center;
    background-color: #f6f6f6;
    border: 1px solid #dadce0;
    font-size: 14px;
    color: #3c4043;
}

.info-txt,
.info-link {
    margin-top: -3px;
}

.info-link {
    margin-left: 11px;
    color: #185abc;
    text-decoration: underline;
}

.dialog-actions {
    height: 36px;
    margin-top: 36px;
    display: flex;
    align-items: center;
    justify-content: flex-end;
    gap: 44px;
    padding-right: 2px;
    font-size: 14px;
}

.btn-cancel {
    color: #3c4043;
}

.btn-save {
    color: #185abc;
}

/* windows taskbar */
.taskbar {
    height: 46px;
    flex-shrink: 0;
    display: flex;
    align-items: center;
    background: linear-gradient(90deg, #dff0fa, #e4f2fb 50%, #dcedf8);
    border-top: 1px solid #c8d8e3;
    color: #222;
}

.weather {
    width: 501px;
    flex-shrink: 0;
    padding-left: 20px;
    display: flex;
    align-items: center;
    gap: 7px;
}

.weather-ic {
    width: 23px;
    height: 28px;
}

.weather-txt {
    display: flex;
    flex-direction: column;
    font-size: 12px;
    line-height: 16px;
}

.win-logo {
    width: 23px;
    height: 23px;
}

.search-pill {
    width: 218px;
    height: 31px;
    margin-left: 13px;
    padding: 0 3px 0 8px;
    display: flex;
    align-items: center;
    background-color: #f7fbfe;
    border: 1px solid #d5e1ea;
    border-radius: 16px;
}

.pill-ic {
    width: 18px;
    height: 18px;
}

.pill-txt {
    margin-left: 10px;
    font-size: 13px;
    color: #555;
}

.pill-art {
    width: 48px;
    height: 30px;
    margin-left: auto;
}

.apps {
    display: flex;
    margin-left: 4px;
}

.app-ic {
    position: relative;
    width: 44px;
    height: 46px;
    display: flex;
    align-items: center;
    justify-content: center;
}

.app-ic svg {
    width: 24px;
    height: 24px;
}

.app-chrome::before {
    content: "";
    position: absolute;
    left: 3px;
    top: 4px;
    width: 38px;
    height: 38px;
    border-radius: 4px;
    background-color: #f4f9fc;
}

.app-chrome svg {
    position: relative;
}

.app-line::before {
    content: "";
    position: absolute;
    left: 2px;
    top: 3px;
    width: 34px;
    height: 39px;
    border-radius: 4px 0 0 4px;
    background-color: #ecb7b5;
}

.app-line::after {
    content: "";
    position: absolute;
    left: 37px;
    top: 3px;
    width: 5px;
    height: 39px;
    border-radius: 0 4px 4px 0;
    background-color: #eec4c3;
}

.line-tile {
    position: relative;
    width: 24px;
    height: 24px;
    border-radius: 5px;
    background-color: #0ab432;
    display: flex;
    align-items: center;
    justify-content: center;
}

.line-bubble {
    width: 20px;
    height: 15px;
    border-radius: 8px;
    background-color: #fff;
    color: #0ab432;
    font-size: 6px;
    font-weight: 700;
    line-height: 15px;
    text-align: center;
}

.app-bar {
    position: absolute;
    left: 13px;
    bottom: 5px;
    width: 18px;
    height: 3px;
    border-radius: 2px;
    background-color: #1a73c8;
}

.app-line .app-bar {
    background-color: #c5302c;
    width: 22px;
    left: 9px;
}

.app-dot {
    position: absolute;
    left: 19px;
    bottom: 3px;
    width: 6px;
    height: 3px;
    border-radius: 2px;
    background-color: #7a7a7a;
}

.tray {
    margin-left: auto;
    display: flex;
    align-items: center;
    padding-right: 18px;
    gap: 12px;
}

.tray-ic {
    width: 20px;
    height: 20px;
}

.tray-sound {
    margin-left: -7px;
    width: 18px;
    height: 18px;
}

.clock {
    width: 62px;
    margin-left: 3px;
    display: flex;
    flex-direction: column;
    align-items: flex-end;
    font-size: 12px;
    line-height: 17px;
    white-space: nowrap;
}
```
